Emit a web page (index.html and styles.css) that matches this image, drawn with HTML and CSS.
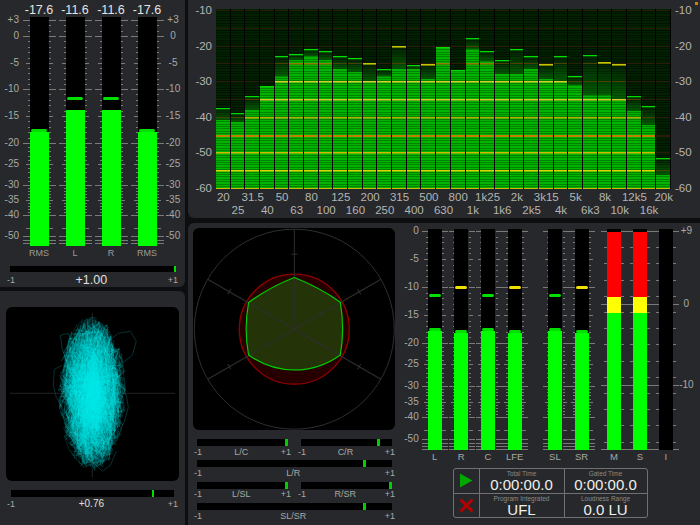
FILE: index.html
```html
<!DOCTYPE html>
<html lang="en">
<head>
<meta charset="utf-8">
<title>Surround Meter</title>
<link rel="stylesheet" href="styles.css">
</head>
<body>
<div class="app">
  <div class="col-left">
    <section class="panel panel-levels">
      <div class="readouts">
        <span>-17.6</span><span>-11.6</span><span>-11.6</span><span>-17.6</span>
      </div>
      <div class="meter-row">
        <div class="scale scale-left">
          <span style="top:3px">+3</span><span style="top:19px">0</span><span style="top:46px">-5</span><span style="top:72px">-10</span><span style="top:99px">-15</span><span style="top:126px">-20</span><span style="top:147px">-25</span><span style="top:168px">-30</span><span style="top:183px">-35</span><span style="top:198px">-40</span><span style="top:219px">-50</span>
        </div>
        <div class="meters-wide">
          <div class="meter" data-ticks="db"><div class="bar"><div class="fill" style="height:114px"></div><i class="peak" style="top:112px"></i></div></div>
          <div class="meter" data-ticks="db"><div class="bar"><div class="fill" style="height:136px"></div><i class="peak" style="top:80px"></i></div></div>
          <div class="meter" data-ticks="db"><div class="bar"><div class="fill" style="height:136px"></div><i class="peak" style="top:80px"></i></div></div>
          <div class="meter" data-ticks="db"><div class="bar"><div class="fill" style="height:114px"></div><i class="peak" style="top:112px"></i></div></div>
        </div>
        <div class="scale scale-right">
          <span style="top:3px">+3</span><span style="top:19px">0</span><span style="top:46px">-5</span><span style="top:72px">-10</span><span style="top:99px">-15</span><span style="top:126px">-20</span><span style="top:147px">-25</span><span style="top:168px">-30</span><span style="top:183px">-35</span><span style="top:198px">-40</span><span style="top:219px">-50</span>
        </div>
      </div>
      <div class="channel-labels">
        <span>RMS</span><span>L</span><span>R</span><span>RMS</span>
      </div>
      <div class="corr corr-top">
        <div class="corr-track"><i class="corr-mark" style="left:164px"></i></div>
        <div class="corr-labels"><span>-1</span><b>+1.00</b><span>+1</span></div>
      </div>
    </section>
    <section class="panel panel-vector">
      <div class="scope"><canvas id="vector" width="173" height="174"></canvas></div>
      <div class="corr corr-vector">
        <div class="corr-track"><i class="corr-mark" style="left:141px"></i></div>
        <div class="corr-labels"><span>-1</span><b>+0.76</b><span>+1</span></div>
      </div>
    </section>
  </div>
  <div class="col-right">
    <section class="panel panel-spectrum">
      <div class="spectrum-main">
        <div class="scale spec-scale spec-left">
          <span style="top:1px">-10</span><span style="top:36.5px">-20</span><span style="top:72px">-30</span><span style="top:107.5px">-40</span><span style="top:143px">-50</span><span style="top:179px">-60</span>
        </div>
        <canvas id="spectrum" width="455" height="180"></canvas>
        <div class="scale spec-scale spec-right">
          <span style="top:1px">-10</span><span style="top:36.5px">-20</span><span style="top:72px">-30</span><span style="top:107.5px">-40</span><span style="top:143px">-50</span><span style="top:179px">-60</span>
        </div>
      </div>
      <div class="freq freq-a">
        <span>20</span><span>31.5</span><span>50</span><span>80</span><span>125</span><span>200</span><span>315</span><span>500</span><span>800</span><span>1k25</span><span>2k</span><span>3k15</span><span>5k</span><span>8k</span><span>12k5</span><span>20k</span>
      </div>
      <div class="freq freq-b">
        <span>25</span><span>40</span><span>63</span><span>100</span><span>160</span><span>250</span><span>400</span><span>630</span><span>1k</span><span>1k6</span><span>2k5</span><span>4k</span><span>6k3</span><span>10k</span><span>16k</span>
      </div>
      <i class="status-dot"></i>
    </section>
    <section class="panel panel-surround">
      <div class="gonio-col">
        <div class="gonio">
          <svg width="202" height="202" viewBox="-101.3 -101.2 202 202">
            <defs>
              <g id="spoke">
                <path d="M0 0V-100M-3 -75H3M-2 -30H2M-1 -16H1"/>
              </g>
            </defs>
            <circle class="g-ring" r="100"/>
            <circle class="g-red" r="55"/>
            <path class="g-fill" d="M0-51.7Q25-42 46-27Q50.6 0 46 25.7Q25 40.8 0 40.7Q-25 40.8-45.7 25.7Q-50.6 0-45.7-26.7Q-25-42 0-51.7Z"/>
            <g class="g-spokes">
              <use href="#spoke"/>
              <use href="#spoke" transform="rotate(60)"/>
              <use href="#spoke" transform="rotate(-60)"/>
              <use href="#spoke" transform="rotate(120)"/>
              <use href="#spoke" transform="rotate(-120)"/>
            </g>
            <path class="g-line" d="M0-51.7Q25-42 46-27Q50.6 0 46 25.7Q25 40.8 0 40.7Q-25 40.8-45.7 25.7Q-50.6 0-45.7-26.7Q-25-42 0-51.7Z"/>
          </svg>
        </div>
        <div class="corr-grid">
          <div class="corr corr-small half-l">
            <div class="corr-track"><i class="corr-mark" style="left:88px"></i></div>
            <div class="corr-labels"><span>-1</span><span>L/C</span><span>+1</span></div>
          </div>
          <div class="corr corr-small half-r">
            <div class="corr-track"><i class="corr-mark" style="left:76px"></i></div>
            <div class="corr-labels"><span>-1</span><span>C/R</span><span>+1</span></div>
          </div>
          <div class="corr corr-small full">
            <div class="corr-track"><i class="corr-mark" style="left:166px"></i></div>
            <div class="corr-labels"><span>-1</span><span>L/R</span><span>+1</span></div>
          </div>
          <div class="corr corr-small half-l">
            <div class="corr-track"><i class="corr-mark" style="left:88px"></i></div>
            <div class="corr-labels"><span>-1</span><span>L/SL</span><span>+1</span></div>
          </div>
          <div class="corr corr-small half-r">
            <div class="corr-track"><i class="corr-mark" style="left:88px"></i></div>
            <div class="corr-labels"><span>-1</span><span>R/SR</span><span>+1</span></div>
          </div>
          <div class="corr corr-small full">
            <div class="corr-track"><i class="corr-mark" style="left:166px"></i></div>
            <div class="corr-labels"><span>-1</span><span>SL/SR</span><span>+1</span></div>
          </div>
        </div>
      </div>
      <div class="surround-col">
        <div class="surround-meters">
          <div class="scale scale-multi">
            <span style="top:2px">0</span><span style="top:30px">-5</span><span style="top:58px">-10</span><span style="top:86px">-15</span><span style="top:113.6px">-20</span><span style="top:135px">-25</span><span style="top:157px">-30</span><span style="top:172.7px">-35</span><span style="top:188px">-40</span><span style="top:210px">-50</span>
          </div>
          <div class="meter-group">
            <div class="meter-n"><div class="meter narrow" data-ticks="db2"><div class="bar"><div class="fill" style="height:118.5px"></div><i class="peak" style="top:65px"></i><i class="peak" style="top:99px"></i></div></div><span>L</span></div>
            <div class="meter-n"><div class="meter narrow" data-ticks="db2"><div class="bar"><div class="fill" style="height:116.8px"></div><i class="peak yellow" style="top:57px"></i><i class="peak" style="top:101px"></i></div></div><span>R</span></div>
            <div class="meter-n"><div class="meter narrow" data-ticks="db2"><div class="bar"><div class="fill" style="height:118.5px"></div><i class="peak" style="top:65px"></i><i class="peak" style="top:99px"></i></div></div><span>C</span></div>
            <div class="meter-n"><div class="meter narrow" data-ticks="db2"><div class="bar"><div class="fill" style="height:116.8px"></div><i class="peak yellow" style="top:57px"></i><i class="peak" style="top:101px"></i></div></div><span>LFE</span></div>
          </div>
          <div class="meter-group group-surround">
            <div class="meter-n"><div class="meter narrow" data-ticks="db2"><div class="bar"><div class="fill" style="height:118.5px"></div><i class="peak" style="top:65px"></i><i class="peak" style="top:99px"></i></div></div><span>SL</span></div>
            <div class="meter-n"><div class="meter narrow" data-ticks="db2"><div class="bar"><div class="fill" style="height:116.8px"></div><i class="peak yellow" style="top:57px"></i><i class="peak" style="top:101px"></i></div></div><span>SR</span></div>
          </div>
          <div class="meter-group group-loud">
            <div class="meter-n loud"><div class="meter narrow" data-ticks="lu"><div class="bar"><div class="fill loud-fill" style="height:218px"><i class="seg seg-red" style="height:65px"></i><i class="seg seg-yellow" style="height:16px"></i></div></div></div><span>M</span></div>
            <div class="meter-n loud"><div class="meter narrow" data-ticks="lu"><div class="bar"><div class="fill loud-fill" style="height:218px"><i class="seg seg-red" style="height:65px"></i><i class="seg seg-yellow" style="height:16px"></i></div></div></div><span>S</span></div>
            <div class="meter-n loud"><div class="meter narrow" data-ticks="lu"><div class="bar"></div></div><span>I</span></div>
          </div>
          <div class="scale scale-lu">
            <span style="top:2px">+9</span><span style="top:75px">0</span><span style="top:156px">-10</span>
          </div>
        </div>
        <div class="status">
          <div class="status-icon">
            <svg width="14" height="15" viewBox="0 0 14 15"><path class="icon-play" d="M1 .5L13.5 7.5L1 14.5Z"/></svg>
          </div>
          <div class="status-cell"><small>Total Time</small><strong>0:00:00.0</strong></div>
          <div class="status-cell"><small>Gated Time</small><strong>0:00:00.0</strong></div>
          <div class="status-icon">
            <svg width="15" height="15" viewBox="0 0 15 15"><path class="icon-x" d="M1.5 1.5L13.5 13.5M13.5 1.5L1.5 13.5"/></svg>
          </div>
          <div class="status-cell"><small>Program Integrated</small><strong>UFL</strong></div>
          <div class="status-cell"><small>Loudness Range</small><strong>0.0 LU</strong></div>
        </div>
      </div>
    </section>
  </div>
</div>
<script src="app.js"></script>
</body>
</html>
```
FILE: styles.css
```css
* { box-sizing: border-box; }
html, body { margin: 0; padding: 0; height: 100%; }
body {
  background: #0d0e0f;
  color: #a9a9a4;
  font-family: "Liberation Sans", Arial, sans-serif;
  overflow: hidden;
}
i { display: block; font-style: normal; }

.app {
  width: 700px;
  height: 525px;
  display: grid;
  grid-template-columns: 185px 512px;
  column-gap: 3px;
}
.col-left, .col-right { display: flex; flex-direction: column; }
.col-left { gap: 4px; }
.col-right { gap: 5px; }

.panel { background: #26282c; border-radius: 6px; position: relative; }
.panel-levels { height: 287px; border-radius: 0 0 6px 0; }
.panel-vector { height: 234px; padding-top: 16px; border-radius: 0 6px 0 0; }
.panel-spectrum { height: 218px; padding-top: 9px; border-radius: 0 0 0 6px; }
.panel-surround { height: 302px; display: flex; border-radius: 6px 0 0 0; }

/* Level meters */
.readouts {
  height: 17px;
  margin-left: 21px;
  display: flex;
  color: #e4e4e0;
  font-size: 12.5px;
  line-height: 20px;
}
.readouts span { width: 36px; text-align: center; }
.meter-row { display: flex; height: 229px; }
.scale { position: relative; font-size: 10px; color: #a8a8a3; }
.scale span { position: absolute; transform: translateY(-50%); line-height: 12px; white-space: nowrap; }
.scale-left { width: 22px; }
.scale-left span { right: 3px; }
.scale-right { width: 18px; }
.scale-right span { left: 0; width: 18px; text-align: center; }
.meters-wide { display: flex; gap: 2px; width: 142px; }
.meter { position: relative; width: 34px; height: 100%; display: flex; justify-content: center; }
.meter svg { position: absolute; left: 0; top: 0; }
.bar { position: relative; width: 19px; height: 100%; background: #000; display: flex; align-items: flex-end; }
.fill { width: 100%; background: #00ff00; position: relative; }
.peak {
  position: absolute;
  left: 1.5px;
  right: 1.5px;
  height: 3px;
  border-radius: 1.5px;
  background: #00e000;
}
.peak.yellow { background: #f0e000; }
.channel-labels { display: flex; margin: 1px 0 0 22px; font-size: 9px; color: #9c9c98; }
.channel-labels span { width: 36px; padding-right: 2px; text-align: center; line-height: 12px; }

/* Correlation bars */
.corr-track { position: relative; background: #000; }
.corr-mark { position: absolute; top: 0; bottom: 0; width: 2px; background: #00e000; }
.corr-labels { display: flex; justify-content: space-between; align-items: center; font-size: 9px; color: #a8a8a3; }
.corr-labels b { font-weight: normal; color: #e0e0dc; }
.corr-top { margin-top: 7px; padding: 0 6px; }
.corr-top .corr-track { height: 6px; margin: 0 4px; }
.corr-top .corr-labels { height: 15px; padding: 0 1px; }
.corr-top b { font-size: 12.5px; }
.corr-vector { margin-top: 9px; padding: 0 7px; }
.corr-vector .corr-track { height: 7px; margin: 0 4px; }
.corr-vector .corr-labels { height: 13px; }
.corr-vector b { font-size: 10px; }

.scope { margin-left: 6px; width: 173px; height: 174px; border-radius: 6px; overflow: hidden; background: #000; }
.scope canvas, #spectrum { display: block; }

/* Spectrum */
.spectrum-main { display: flex; height: 180px; }
.spec-scale { font-size: 11.5px; color: #b5b5b0; }
.spec-left { width: 28px; }
.spec-left span { right: 4px; }
.spec-right { width: 29px; }
.spec-right span { left: 4px; }
.freq { display: flex; font-size: 11.5px; color: #b5b5b0; line-height: 12.5px; }
.freq span { width: 29.36px; flex: none; text-align: center; white-space: nowrap; }
.freq-a { margin: 2px 0 0 20.66px; }
.freq-b { margin: 0 0 0 35.34px; }
.status-dot { position: absolute; top: 2px; right: 2px; width: 3px; height: 3px; background: #d08000; }

/* Surround */
.gonio-col { width: 207px; padding: 5px 0 0 5px; flex: none; }
.gonio { width: 202px; height: 202px; background: #000; border-radius: 6px; overflow: hidden; }
.gonio svg { display: block; }
.g-ring { fill: none; stroke: #2f2f2f; stroke-width: 1; }
.g-red { fill: #260000; stroke: #920000; stroke-width: 1.3; }
.g-fill { fill: #243308; }
.g-spokes { fill: none; stroke: #2f2f2f; stroke-width: 1; }
.g-line { fill: none; stroke: #00cc00; stroke-width: 1.2; stroke-linejoin: round; }

.corr-grid { display: grid; grid-template-columns: 104px 97px; margin: 9px 0 0 1px; }
.corr-small { height: 21.3px; }
.corr-small .corr-track { height: 7px; margin: 0 3px; }
.corr-small .corr-mark { width: 2.5px; background: #00d000; }
.corr-small .corr-labels { height: 11.4px; }
.half-l .corr-track { margin: 0 12px 0 3px; }
.half-l .corr-labels { padding-right: 7px; }
.full { grid-column: 1 / 3; }

.surround-col { padding-top: 6px; flex: none; width: 305px; }
.surround-meters { display: flex; height: 220.5px; }
.scale-multi { width: 26.3px; }
.scale-multi span { right: 2.6px; }
.scale-lu { width: 15px; }
.scale-lu span { left: 0; width: 15px; text-align: center; }
.meter-group { display: flex; }
.group-surround { margin-left: 13.67px; }
.group-loud { margin-left: 6px; }
.meter-n { width: 26.67px; height: 100%; text-align: center; font-size: 9.5px; color: #a8a8a3; line-height: 14px; }
.meter-n.loud { width: 26px; }
.meter.narrow { width: 100%; }
.narrow .bar { width: 14px; }
.narrow .peak { left: 1px; right: 1px; }
.loud-fill { display: flex; flex-direction: column; }
.seg { width: 100%; }
.seg-red { background: #ff0000; }
.seg-yellow { background: #ffff00; }

/* Status block */
.status {
  margin: 18.5px 0 0 57.5px;
  width: 195px;
  height: 50px;
  display: grid;
  grid-template-columns: 25px 84px 1fr;
  grid-template-rows: 1fr 1fr;
  gap: 1px;
  background: #6f7072;
  border: 1px solid #6f7072;
  border-radius: 3px;
  overflow: hidden;
}
.status-icon { background: #26282c; display: flex; align-items: center; justify-content: center; }
.status-cell { background: #26282c; display: flex; flex-direction: column; align-items: center; }
.status-cell small { font-size: 6.5px; line-height: 8px; color: #8b8b88; padding-top: 1px; }
.status-cell strong { font-weight: normal; font-size: 15px; line-height: 14px; color: #f0f0ec; }
.icon-play { fill: #00a800; }
.icon-x { fill: none; stroke: #b40000; stroke-width: 3; }
```
FILE: app.js
```javascript
(function () {
  var NS = 'http://www.w3.org/2000/svg';

  function lerpMap(points) {
    return function (v) {
      for (var i = 0; i < points.length - 1; i++) {
        var a = points[i], b = points[i + 1];
        if (v <= a[0] && v >= b[0]) {
          return a[1] + (a[0] - v) / (a[0] - b[0]) * (b[1] - a[1]);
        }
      }
      return points[points.length - 1][1];
    };
  }

  var dbWide = lerpMap([[3, 3], [0, 19], [-5, 46], [-10, 72], [-15, 99], [-20, 126], [-25, 147], [-30, 168], [-35, 183], [-40, 198], [-45, 211], [-50, 219], [-55, 223], [-60, 226], [-70, 228.5]]);
  var dbNarrow = lerpMap([[0, 2], [-5, 30], [-10, 58], [-15, 86], [-20, 113.6], [-25, 135], [-30, 157], [-35, 172.7], [-40, 188], [-45, 201], [-50, 210], [-55, 214], [-60, 217], [-70, 220]]);

  function dbTicks(map, top, major) {
    var list = [];
    for (var d = top; d >= -40; d--) {
      var len = (d === 3 || d % 10 === 0) ? major : (d % 5 === 0 ? 4 : 2);
      list.push([map(d), len]);
    }
    list.push([map(-45), 4], [map(-50), major], [map(-55), major], [map(-60), major], [map(-70), major]);
    return list;
  }
  function luTicks() {
    var list = [];
    for (var y = 2; y < 220; y += 16.2) list.push([y, 3]);
    list.push([2, 6], [75, 6], [156, 6], [220, 6]);
    return list;
  }

  var tickSets = {
    db: dbTicks(dbWide, 3, 7),
    db2: dbTicks(dbNarrow, 0, 6),
    lu: luTicks()
  };

  document.querySelectorAll('.meter').forEach(function (m) {
    var list = tickSets[m.getAttribute('data-ticks')];
    var w = m.clientWidth, h = m.clientHeight;
    var bar = m.querySelector('.bar');
    var bw = bar.clientWidth;
    var l = (w - bw) / 2, r = l + bw;
    var svg = document.createElementNS(NS, 'svg');
    svg.setAttribute('width', w);
    svg.setAttribute('height', h);
    var d = '';
    list.forEach(function (t) {
      var y = Math.round(t[0]) + 0.5;
      d += 'M' + (l - t[1]) + ' ' + y + 'H' + l + 'M' + r + ' ' + y + 'H' + (r + t[1]);
    });
    var p = document.createElementNS(NS, 'path');
    p.setAttribute('d', d);
    p.setAttribute('stroke', '#7a7a78');
    p.setAttribute('fill', 'none');
    p.setAttribute('shape-rendering', 'crispEdges');
    svg.appendChild(p);
    m.insertBefore(svg, bar);
  });

  /* Spectrum: band tops are [solid level, peak hold] in canvas rows */
  var bands = [
    [111, 99], [113, 104], [101, 87], [77, 77], [67, 47], [51, 45], [47, 40], [51, 42],
    [60, 47], [63, 49], [72, 54], [67, 60], [60, 37], [60, 56], [70, 55], [38, 38],
    [61, 61], [40, 29], [52, 42], [65, 51], [65, 40], [60, 47], [70, 55], [72, 47],
    [76, 67], [86, 46], [86, 53], [90, 55], [102, 87], [116, 97], [166, 149]
  ];
  var lineLit = {
    '-10': '#3a2a00', '-15': '#5a4000', '-20': '#7a6a00', '-25': '#947a00', '-30': '#d6ca2a',
    '-35': '#d6ca2a', '-40': '#bcaa00', '-45': '#bd8000', '-50': '#d0b800', '-55': '#e0d000', '-60': '#d0b800'
  };
  var sp = document.getElementById('spectrum').getContext('2d');
  var bw = 455 / 31;
  function dbY(db) { return Math.min(Math.round((-10 - db) * 3.56) + 1, 179); }
  var lines = {};
  [-10, -15, -20, -25, -30, -35, -40, -45, -50, -55, -60].forEach(function (db) { lines[dbY(db)] = db; });
  function darkRow(y) { return Math.floor(y / 2.4) !== Math.floor((y + 1) / 2.4); }

  bands.forEach(function (b, i) {
    var x0 = Math.round(i * bw), x1 = Math.round((i + 1) * bw);
    var solid = b[0], peak = b[1];
    var y, c;
    for (y = 0; y < 180; y++) {
      if (y >= solid) {
        c = darkRow(y) ? '#008400' : '#00b400';
      } else if (y >= peak && solid > peak) {
        var t = (y - peak) / (solid - peak);
        var g = Math.round(34 + t * 60) - (darkRow(y) ? 14 : 0);
        c = 'rgb(3,' + g + ',3)';
      } else {
        c = darkRow(y) ? '#001400' : '#022002';
      }
      sp.fillStyle = c;
      sp.fillRect(x0, y, x1 - x0, 1);
    }
    for (y in lines) {
      y = +y;
      var db = lines[y];
      sp.fillStyle = y >= solid ? lineLit[db] : (y >= peak ? '#4c4000' : '#2a1c06');
      sp.fillRect(x0, y, x1 - x0, db === -45 ? 2 : (y >= solid ? 1.5 : 1));
    }
    var onLine = solid !== peak && (lines[peak] !== undefined || lines[peak + 1] !== undefined || lines[peak - 1] !== undefined);
    sp.fillStyle = onLine ? '#c4c400' : '#00dc00';
    sp.fillRect(x0, peak, x1 - x0, onLine ? 1.6 : 1.3);
    sp.fillStyle = '#000';
    sp.fillRect(x1 - 1, 0, 1, 180);
  });

  /* Vector scope */
  var vc = document.getElementById('vector').getContext('2d');
  var seed = 12345;
  function rnd() {
    seed = (seed * 1664525 + 1013904223) >>> 0;
    return seed / 4294967296;
  }
  function gauss() {
    return Math.sqrt(-2 * Math.log(rnd() + 1e-9)) * Math.cos(6.28318 * rnd());
  }
  var cx = 86.3, cy = 86.3;
  vc.strokeStyle = '#242424';
  vc.lineWidth = 1;
  vc.beginPath();
  vc.moveTo(4, cy); vc.lineTo(169, cy);
  vc.moveTo(cx, 6); vc.lineTo(cx, 170);
  vc.stroke();

  vc.strokeStyle = '#0a4648';
  vc.lineWidth = 0.7;
  var outline = [
    [16, -52, 26, -60, 38, -62, 44, -52, 40, -38, 30, -30, 26, -42, 22, -28],
    [-20, -50, -24, -60, -32, -58, -30, -44, -26, -34],
    [-30, -28, -38, -24, -39, -8, -36, 4, -30, 14],
    [28, -12, 34, 2, 36, 14, 32, 28, 26, 42],
    [-22, 58, -14, 68, -8, 74, 2, 70, 10, 78, 18, 72, 24, 58]
  ];
  outline.forEach(function (o) {
    vc.beginPath();
    vc.moveTo(cx + o[0], cy + o[1]);
    for (var i = 2; i < o.length; i += 2) vc.lineTo(cx + o[i], cy + o[i + 1]);
    vc.stroke();
  });

  /* Sparse fringe, then the dense core of the trace */
  function trace(count, sx, sy, ex, ey, alpha, width) {
    var px = 0, py = 0;
    vc.lineWidth = width;
    vc.strokeStyle = 'rgba(0,235,235,' + alpha + ')';
    for (var n = 0; n < count; n++) {
      var nx = 0.3 * px + gauss() * sx;
      var ny = 0.6 * py + gauss() * sy;
      var e = Math.sqrt(nx * nx / (ex * ex) + ny * ny / (ey * ey));
      if (e > 1) {
        var f = (0.72 + 0.28 * rnd()) / e;
        nx *= f;
        ny *= f;
      }
      vc.beginPath();
      vc.moveTo(cx + px, cy + py);
      vc.lineTo(cx + nx, cy + ny);
      vc.stroke();
      px = nx;
      py = ny;
    }
  }
  trace(900, 22, 38, 34, 78, 0.26, 0.6);
  trace(2600, 14, 30, 29, 76, 0.17, 0.6);
})();
```
